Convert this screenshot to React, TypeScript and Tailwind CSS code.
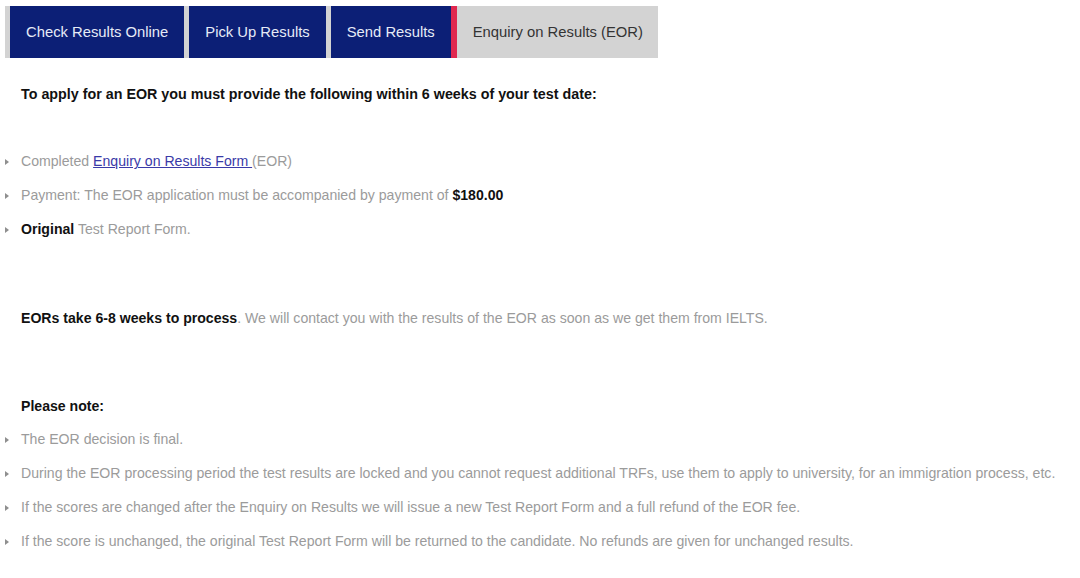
import React from 'react';

const font = { fontFamily: '"Liberation Sans", Arial, sans-serif' };

function Bullet({ children }: { children: React.ReactNode }) {
  return (
    <li className="flex items-center h-5 relative pl-[21px] text-[14.1px] text-[#9b9b9b]">
      <span className="absolute left-[5px] top-[7px] w-0 h-0 border-y-[3px] border-y-transparent border-l-[4px] border-l-[#8f8f8f]" />
      <span>{children}</span>
    </li>
  );
}

export default function App() {
  const tabs = ['Check Results Online', 'Pick Up Results', 'Send Results'];
  return (
    <div className="w-[1080px] h-[578px] bg-white overflow-hidden" style={font}>
      <div className="pt-[6px] pl-[5px]">
        <div className="inline-flex h-[52px] bg-[#d3d3d3] pl-[5px] gap-[5px]">
          {tabs.map((t) => (
            <div key={t} className="flex items-center px-4 bg-[#0c1f76] text-[#e6ebf7] text-[14.8px]">
              {t}
            </div>
          ))}
          <div className="flex items-center -ml-[5px] border-l-[6px] border-[#e0284f] pl-[16px] pr-[15px] text-[14.8px] text-[#333]">
            Enquiry on Results (EOR)
          </div>
        </div>
      </div>

      <p className="mt-[26px] pl-[21px] h-5 leading-5 text-[14.3px] font-bold text-[#111]">
        To apply for an EOR you must provide the following within 6 weeks of your test date:
      </p>

      <ul className="mt-[48px] flex flex-col gap-[14px]">
        <Bullet>
          Completed{' '}
          <a className="text-[#3a3aa8] underline">Enquiry on Results Form </a>(EOR)
        </Bullet>
        <Bullet>
          Payment: The EOR application must be accompanied by payment of{' '}
          <b className="text-[#111]">$180.00</b>
        </Bullet>
        <Bullet>
          <b className="text-[#111]">Original</b> Test Report Form.
        </Bullet>
      </ul>

      <p className="mt-[68px] pl-[21px] h-5 leading-5 text-[14.1px] text-[#9b9b9b]">
        <b className="text-[#111]">EORs take 6-8 weeks to process</b>. We will contact you with the results of the EOR as soon as we get them from IELTS.
      </p>

      <p className="mt-[68px] pl-[21px] h-5 leading-5 text-[14.1px] font-bold text-[#111]">Please note:</p>

      <ul className="mt-[14px] flex flex-col gap-[14px]">
        <Bullet>The EOR decision is final.</Bullet>
        <Bullet>
          During the EOR processing period the test results are locked and you cannot request additional TRFs, use them to apply to university, for an immigration process, etc.
        </Bullet>
        <Bullet>
          If the scores are changed after the Enquiry on Results we will issue a new Test Report Form and a full refund of the EOR fee.
        </Bullet>
        <Bullet>
          If the score is unchanged, the original Test Report Form will be returned to the candidate. No refunds are given for unchanged results.
        </Bullet>
      </ul>
    </div>
  );
}
